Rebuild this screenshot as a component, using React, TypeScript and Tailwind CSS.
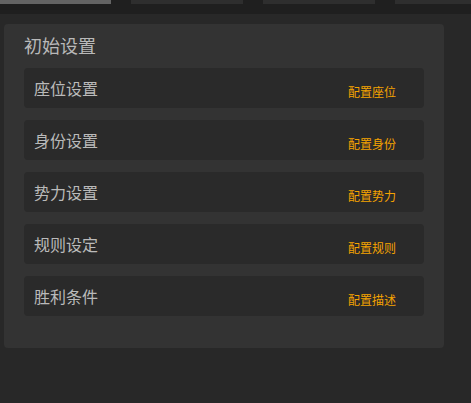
import React from 'react';

const rows = [
  { label: '座位设置', action: '配置座位' },
  { label: '身份设置', action: '配置身份' },
  { label: '势力设置', action: '配置势力' },
  { label: '规则设定', action: '配置规则' },
  { label: '胜利条件', action: '配置描述' },
];

export default function App() {
  return (
    <div
      className="w-[471px] h-[403px] bg-[#282828] overflow-hidden"
      style={{ fontFamily: '"Noto Sans CJK SC", "Noto Sans", sans-serif' }}
    >
      {/* Tab strip */}
      <div className="h-[14px] bg-[#1f1f1f] flex items-start gap-5">
        <div className="w-[111px] h-[4px] bg-[#646464]" />
        <div className="w-[112px] h-[4px] bg-[#2e2e2e]" />
        <div className="w-[112px] h-[4px] bg-[#2e2e2e]" />
        <div className="flex-1 h-[4px] bg-[#2e2e2e]" />
      </div>

      {/* Settings card */}
      <div className="ml-1 mt-[10px] w-[440px] h-[324px] bg-[#333333] rounded px-5 pt-[9px]">
        <h2 className="text-[18px] leading-6 text-[#b9b9b9] mb-[11px]">初始设置</h2>
        <div className="flex flex-col gap-3">
          {rows.map((row) => (
            <div
              key={row.label}
              className="h-10 bg-[#2a2a2a] rounded flex items-center justify-between pl-[10px] pr-[28px]"
            >
              <span className="text-base text-[#bababa]">{row.label}</span>
              <span className="text-xs text-[#f5a300] pt-[7px] cursor-pointer">{row.action}</span>
            </div>
          ))}
        </div>
      </div>
    </div>
  );
}
